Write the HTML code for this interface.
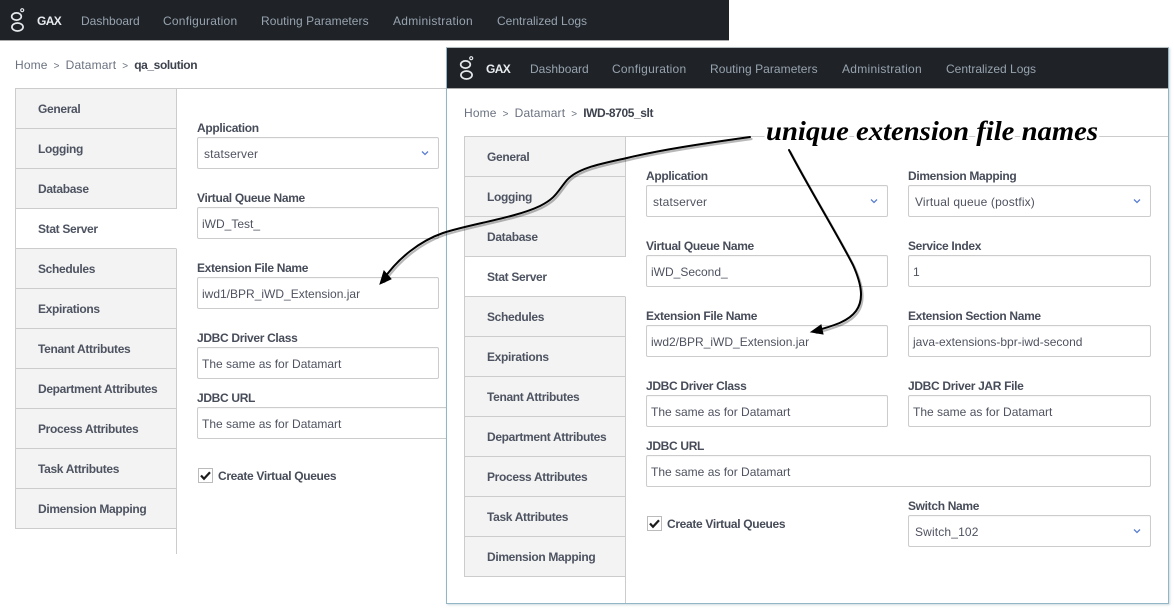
<!DOCTYPE html>
<html><head><meta charset="utf-8">
<style>
html,body{margin:0;padding:0;background:#fff}
body{width:1174px;height:612px;position:relative;overflow:hidden;font-family:"Liberation Sans",Arial,sans-serif;font-size:12px;color:#4a4f5a}
.a{position:absolute;white-space:nowrap}
.win{position:absolute}
.hdr{position:absolute;left:0;top:0;height:40px;background:#1f2328}
.hline{position:absolute;left:0;top:40px;height:1px;background:#aaa}
.logo{position:absolute;left:9px;top:7px}
.gax{position:absolute;left:37px;top:13px;color:#e8ecef;font-weight:bold;font-size:12px;line-height:16px;letter-spacing:-.6px}
.nav{position:absolute;top:13px;color:#97a3ae;font-size:12px;line-height:16px;white-space:nowrap}
.bc{position:absolute;top:57px;line-height:16px;font-size:12px;color:#6a7280;white-space:nowrap;letter-spacing:.15px}
.bc b{color:#3d424d;letter-spacing:-.4px}
.bc span{font-size:10px;margin:0 6px}
.tab{position:absolute;left:15px;height:39px;background:#f3f3f3;border-left:1px solid #ccc;border-right:1px solid #ccc;border-bottom:1px solid #ccc;width:160px;font-weight:bold;color:#4d5360;line-height:41px;text-indent:22px;font-size:12px;letter-spacing:-.33px}
.tab.on{background:#fff;border-right-color:#fff}
.lb{position:absolute;font-weight:bold;color:#474c59;line-height:14px;font-size:12px;white-space:nowrap;letter-spacing:-.33px}
.in{position:absolute;height:30px;border:1px solid #ccc;border-radius:2px;background:#fff;line-height:32px;text-indent:4px;color:#4f5360;font-size:12px;white-space:nowrap;box-shadow:inset 0 1px 1px rgba(0,0,0,.04)}
.sel{text-indent:6px;letter-spacing:.15px}
.sel svg{position:absolute;right:9px;top:12px}
.chk{position:absolute;width:13px;height:13px;border:1px solid #bbb;background:#fff}
</style></head>
<body>

<!-- left window -->
<div class="win" style="left:0;top:0;width:729px;height:560px">
<div class="hdr" style="width:729px"></div>
<div class="hline" style="width:729px"></div>
<svg class="logo" width="18" height="26" viewBox="0 0 18 26" fill="none" stroke="#e4e8ea" stroke-width="1.7"><circle cx="13.2" cy="3.2" r="1.5" stroke-width="1.2"/><ellipse cx="7.5" cy="9.5" rx="4.8" ry="3.6"/><ellipse cx="8.5" cy="20" rx="5.6" ry="4"/></svg>
<div class="gax">GAX</div>
<div class="nav" style="left:81px">Dashboard</div>
<div class="nav" style="left:163px;letter-spacing:.23px">Configuration</div>
<div class="nav" style="left:261px;letter-spacing:.05px">Routing Parameters</div>
<div class="nav" style="left:393px;letter-spacing:.28px">Administration</div>
<div class="nav" style="left:497px">Centralized Logs</div>
<div class="bc" style="left:15px">Home<span>&gt;</span>Datamart<span>&gt;</span><b>qa_solution</b></div>
<div class="a" style="left:15px;top:88px;width:432px;height:1px;background:#ccc"></div>
<div class="a" style="left:176px;top:88px;width:1px;height:466px;background:#ccc"></div>
<div class="tab" style="top:89px">General</div>
<div class="tab" style="top:129px">Logging</div>
<div class="tab" style="top:169px">Database</div>
<div class="tab on" style="top:209px">Stat Server</div>
<div class="tab" style="top:249px">Schedules</div>
<div class="tab" style="top:289px">Expirations</div>
<div class="tab" style="top:329px">Tenant Attributes</div>
<div class="tab" style="top:369px">Department Attributes</div>
<div class="tab" style="top:409px">Process Attributes</div>
<div class="tab" style="top:449px">Task Attributes</div>
<div class="tab" style="top:489px">Dimension Mapping</div>
<div class="lb" style="left:197px;top:121px">Application</div>
<div class="in sel" style="left:197px;top:137px;width:240px">statserver<svg width="8" height="6" viewBox="0 0 8 6" fill="none" stroke="#5a7fd0" stroke-width="1.3"><path d="M1 1.5 4 4.5 7 1.5"/></svg></div>
<div class="lb" style="left:197px;top:191px">Virtual Queue Name</div>
<div class="in" style="left:197px;top:207px;width:240px">iWD_Test_</div>
<div class="lb" style="left:197px;top:261px">Extension File Name</div>
<div class="in" style="left:197px;top:277px;width:240px">iwd1/BPR_iWD_Extension.jar</div>
<div class="lb" style="left:197px;top:331px">JDBC Driver Class</div>
<div class="in" style="left:197px;top:347px;width:240px">The same as for Datamart</div>
<div class="lb" style="left:197px;top:391px">JDBC URL</div>
<div class="in" style="left:197px;top:407px;width:262px">The same as for Datamart</div>
<div class="chk" style="left:198px;top:468px"></div>
<svg class="a" style="left:198px;top:468px" width="15" height="15" viewBox="0 0 15 15" fill="none" stroke="#1c1c1c" stroke-width="2.2"><path d="M3 7.5 6 10.8 12 4.2"/></svg>
<div class="lb" style="left:218px;top:469px">Create Virtual Queues</div>
</div>

<!-- right window -->
<div class="a" style="left:446px;top:47px;width:721px;height:555px;background:#fff;border:1px solid #92b6c6;border-top-color:#b4bcc0;box-shadow:1px 1px 2px rgba(120,150,170,.35)"></div>
<div class="win" style="left:447px;top:48px;width:721px;height:555px;overflow:hidden">
<div class="hdr" style="width:721px"></div>
<div class="hline" style="width:721px"></div>
<svg class="logo" style="left:11px" width="18" height="26" viewBox="0 0 18 26" fill="none" stroke="#e4e8ea" stroke-width="1.7"><circle cx="13.2" cy="3.2" r="1.5" stroke-width="1.2"/><ellipse cx="7.5" cy="9.5" rx="4.8" ry="3.6"/><ellipse cx="8.5" cy="20" rx="5.6" ry="4"/></svg>
<div class="gax" style="left:39px">GAX</div>
<div class="nav" style="left:83px">Dashboard</div>
<div class="nav" style="left:165px;letter-spacing:.23px">Configuration</div>
<div class="nav" style="left:263px;letter-spacing:.05px">Routing Parameters</div>
<div class="nav" style="left:395px;letter-spacing:.28px">Administration</div>
<div class="nav" style="left:499px">Centralized Logs</div>
<div class="bc" style="left:17px">Home<span>&gt;</span>Datamart<span>&gt;</span><b>IWD-8705_slt</b></div>
<div class="a" style="left:17px;top:88px;width:704px;height:1px;background:#ccc"></div>
<div class="a" style="left:178px;top:88px;width:1px;height:467px;background:#ccc"></div>
<div class="tab" style="left:17px;top:89px">General</div>
<div class="tab" style="left:17px;top:129px">Logging</div>
<div class="tab" style="left:17px;top:169px">Database</div>
<div class="tab on" style="left:17px;top:209px">Stat Server</div>
<div class="tab" style="left:17px;top:249px">Schedules</div>
<div class="tab" style="left:17px;top:289px">Expirations</div>
<div class="tab" style="left:17px;top:329px">Tenant Attributes</div>
<div class="tab" style="left:17px;top:369px">Department Attributes</div>
<div class="tab" style="left:17px;top:409px">Process Attributes</div>
<div class="tab" style="left:17px;top:449px">Task Attributes</div>
<div class="tab" style="left:17px;top:489px">Dimension Mapping</div>

<div class="lb" style="left:199px;top:121px">Application</div>
<div class="in sel" style="left:199px;top:137px;width:240px">statserver<svg width="8" height="6" viewBox="0 0 8 6" fill="none" stroke="#5a7fd0" stroke-width="1.3"><path d="M1 1.5 4 4.5 7 1.5"/></svg></div>
<div class="lb" style="left:461px;top:121px">Dimension Mapping</div>
<div class="in sel" style="left:461px;top:137px;width:241px">Virtual queue (postfix)<svg width="8" height="6" viewBox="0 0 8 6" fill="none" stroke="#5a7fd0" stroke-width="1.3"><path d="M1 1.5 4 4.5 7 1.5"/></svg></div>
<div class="lb" style="left:199px;top:191px">Virtual Queue Name</div>
<div class="in" style="left:199px;top:207px;width:240px">iWD_Second_</div>
<div class="lb" style="left:461px;top:191px">Service Index</div>
<div class="in" style="left:461px;top:207px;width:241px">1</div>
<div class="lb" style="left:199px;top:261px">Extension File Name</div>
<div class="in" style="left:199px;top:277px;width:240px">iwd2/BPR_iWD_Extension.jar</div>
<div class="lb" style="left:461px;top:261px">Extension Section Name</div>
<div class="in" style="left:461px;top:277px;width:241px">java-extensions-bpr-iwd-second</div>
<div class="lb" style="left:199px;top:331px">JDBC Driver Class</div>
<div class="in" style="left:199px;top:347px;width:240px">The same as for Datamart</div>
<div class="lb" style="left:461px;top:331px">JDBC Driver JAR File</div>
<div class="in" style="left:461px;top:347px;width:241px">The same as for Datamart</div>
<div class="lb" style="left:199px;top:391px">JDBC URL</div>
<div class="in" style="left:199px;top:407px;width:503px">The same as for Datamart</div>
<div class="chk" style="left:200px;top:468px"></div>
<svg class="a" style="left:200px;top:468px" width="15" height="15" viewBox="0 0 15 15" fill="none" stroke="#1c1c1c" stroke-width="2.2"><path d="M3 7.5 6 10.8 12 4.2"/></svg>
<div class="lb" style="left:220px;top:469px">Create Virtual Queues</div>
<div class="lb" style="left:461px;top:451px">Switch Name</div>
<div class="in sel" style="left:461px;top:467px;width:241px">Switch_102<svg width="8" height="6" viewBox="0 0 8 6" fill="none" stroke="#5a7fd0" stroke-width="1.3"><path d="M1 1.5 4 4.5 7 1.5"/></svg></div>
</div>

<!-- annotations -->
<svg class="a" style="left:0;top:0" width="1174" height="612" viewBox="0 0 1174 612" fill="none">
<g stroke="#000" opacity=".28" transform="translate(1.5 2)" stroke-width="2.2" stroke-linecap="round">
<path d="M750 137C700 144 660 150 627 158C600 164 578 168 567 180C557 192 556 198 540 206C515 218 470 224 443 233C420 241 398 258 383 280"/>
<path d="M789 150C810 190 836 232 853 265C862 285 864 300 856 311C848 322 832 326 815 331"/>
</g>
<path d="M750 137C700 144 660 150 627 158C600 164 578 168 567 180C557 192 556 198 540 206C515 218 470 224 443 233C420 241 398 258 383 280" stroke="#000" stroke-width="2" stroke-linecap="round"/>
<path d="M380 284 384 271 391 279Z" fill="#000" stroke="#000" stroke-width="1"/>
<path d="M789 150C810 190 836 232 853 265C862 285 864 300 856 311C848 322 832 326 815 331" stroke="#000" stroke-width="2" stroke-linecap="round"/>
<path d="M811 332 821 325 823 334Z" fill="#000" stroke="#000" stroke-width="1"/>
<text x="766" y="140" textLength="332" lengthAdjust="spacingAndGlyphs" font-family="Liberation Serif, serif" font-style="italic" font-weight="bold" font-size="27" fill="#000" stroke="#fff" stroke-width="5" stroke-linejoin="round" paint-order="stroke">unique extension file names</text>
</svg>
</body></html>
